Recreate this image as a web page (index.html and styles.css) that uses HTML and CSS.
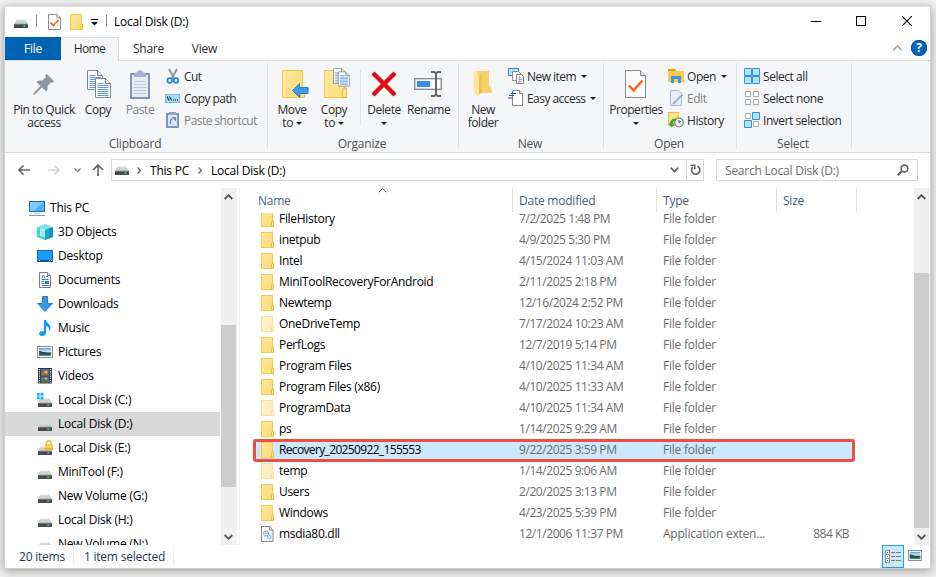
FILE: index.html
```html
<!DOCTYPE html>
<html lang="en">
<head>
    <meta charset="UTF-8">
    <title>Local Disk (D:)</title>
    <link rel="stylesheet" href="styles.css">
</head>
<body>
    <svg class="sprite" width="0" height="0">
        <defs>
            <linearGradient id="gFolder" x1="0" y1="0" x2="1" y2="1"><stop offset="0" stop-color="#ffe79c"/><stop offset="1" stop-color="#fddc78"/></linearGradient>
            <linearGradient id="gDrive" x1="0" y1="0" x2="0" y2="1"><stop offset="0" stop-color="#dfe1e3"/><stop offset="1" stop-color="#bfc3c6"/></linearGradient>
            <linearGradient id="gPic" x1="0" y1="0" x2="0" y2="1"><stop offset="0" stop-color="#5b9fe8"/><stop offset=".45" stop-color="#d4ecfa"/><stop offset=".6" stop-color="#41725b"/><stop offset="1" stop-color="#4a86b8"/></linearGradient>
        </defs>
        <symbol id="i-drive" viewBox="0 0 16 16"><path d="M3.500 6.500h9L15 11H1z" fill="url(#gDrive)"/><rect x="1" y="11" width="14" height="4" rx=".6" fill="#474a4c"/><path d="M1.500 11.300h13" stroke="#8c8c8c" stroke-width=".7"/><rect x="10.500" y="12.300" width="1.800" height="1.500" fill="#38e54d"/></symbol>
        <symbol id="i-folder" viewBox="0 0 13 16"><rect x=".5" y=".5" width="11" height="15" fill="url(#gFolder)" stroke="#efcb52"/><path d="M10.500 15.500V11.200l1-1.200h1v5.500z" fill="#ffe28a" stroke="#e8c043"/></symbol>
        <symbol id="i-dll" viewBox="0 0 13 16"><path d="M.5.5h8l3.500 3.500v11.500H.5z" fill="#fafafa" stroke="#8a8a8a"/><path d="M8.500.5v3.500h3.500" fill="#ddd" stroke="#8a8a8a"/><circle cx="5" cy="7.500" r="2.300" fill="none" stroke="#8f979c" stroke-width="1.400" stroke-dasharray="1.200 .5"/><circle cx="5" cy="7.500" r=".8" fill="#9aa"/><circle cx="8.300" cy="11" r="1.700" fill="none" stroke="#6eb5df" stroke-width="1.400" stroke-dasharray="1.100 .5"/></symbol>
        <symbol id="i-pc" viewBox="0 0 16 16"><rect x=".5" y="1.500" width="15" height="10" fill="#4db2f5" stroke="#1c6fa6"/><path d="M1 2h14L4 11H1z" fill="#7bcbff"/><path d="M5 13h6v1H5z" fill="#b7c1c8"/><path d="M0 15h16v1H0z" fill="#8299a9"/></symbol>
        <symbol id="i-3d" viewBox="0 0 16 16"><path d="M8 0l8 3-8 3-8-3z" fill="#7ee4ec"/><path d="M0 3l8 3v10l-8-3z" fill="#4cd0da"/><path d="M3 3.800l5 2V13l-5-1z" fill="#a7eef1"/><path d="M16 3L8 6v10l8-3z" fill="#0b8ec2"/><path d="M8 6l5-2v8l-5 4z" fill="#16a5cf"/></symbol>
        <symbol id="i-desktop" viewBox="0 0 16 16"><rect x=".5" y="2.500" width="15" height="11" fill="#1a9cff" stroke="#1569a8"/><path d="M1 12h14v1.500H1z" fill="#0d4d85"/><path d="M2 12.500h1m9 0h1m1 0h1" stroke="#fff"/></symbol>
        <symbol id="i-docs" viewBox="0 0 16 16"><path d="M2.500.5h8l3 3v12h-11z" fill="#fff" stroke="#7d7d7d"/><path d="M10.500.5v3h3" fill="#ddd" stroke="#7d7d7d"/><path d="M5 6l1.500-3L8 6M4.500 7.500h7M4.500 9.500h3M4.500 11.500h3M4.500 13.500h7M9 4.500h2" stroke="#2d86c4" fill="none"/><path d="M8 9h4v3H8z" fill="#4d7ea0"/></symbol>
        <symbol id="i-down" viewBox="0 0 16 16"><path d="M5.500.5h5v7h5L8 15.500.5 7.500h5z" fill="#3b98e4" stroke="#2a7dc4"/></symbol>
        <symbol id="i-music" viewBox="0 0 16 16"><path d="M7 0h2c.3 3 4.500 3.800 4.500 7.500 0 1.700-.8 3-1.500 3.500.5-3-1-4.500-3-5V13c0 2-2 3-4 3s-3-1-3-2.500S4 11 7 11z" fill="#0a9df5"/></symbol>
        <symbol id="i-pics" viewBox="0 0 16 16"><rect x=".5" y="2.500" width="15" height="11" fill="#fff" stroke="#8a8a8a"/><rect x="2" y="4" width="12" height="8" fill="url(#gPic)"/><path d="M2 7c3 0 5 2 12 2v1.500H2z" fill="#27503f"/></symbol>
        <symbol id="i-video" viewBox="0 0 16 16"><rect x="1" y="0" width="14" height="15.500" fill="#343434"/><path d="M2.500 1v14M13.500 1v14" stroke="#fff" stroke-width="1.200" stroke-dasharray="1.200 1"/><rect x="4" y="1" width="8" height="6.500" fill="#3d6fbe"/><rect x="4" y="8.500" width="8" height="6.500" fill="#3b72c8"/><path d="M4 5l3-3 2 3 2-2 1 4.500H4z" fill="#a36a2c"/><circle cx="9" cy="4" r="1.500" fill="#e6c132"/><path d="M4 13l4-2 4 3v1H4z" fill="#58733a"/><circle cx="9" cy="10.500" r="1.200" fill="#e8b93a"/></symbol>
        <symbol id="i-drivec" viewBox="0 0 16 16"><use href="#i-drive"/><path d="M0 1h2.700v2.700H0zM3.500.7h3v3h-3zM0 4.500h2.700v2.700H0zM3.500 4.500h3v3h-3z" fill="#16b4f2"/></symbol>
        <symbol id="i-drivee" viewBox="0 0 16 16"><use href="#i-drive"/><path d="M9.500 5V3c0-3 4.500-3 4.500 0v2" fill="none" stroke="#e6b83a" stroke-width="1.400"/><rect x="7.500" y="4" width="8.500" height="6" fill="#f6cf58"/><path d="M7.500 8h8.500v2H7.500z" fill="#e6b437"/></symbol>
        <symbol id="i-check" viewBox="0 0 21 28"><path d="M.5.5h15l5 5v22H.5z" fill="#fbfbfb" stroke="#8b8b8b"/><path d="M15.500.5v5h5" fill="#e6e6e6" stroke="#8b8b8b"/><path d="M4 15.500l4.500 5 9-10" fill="none" stroke="#f0641e" stroke-width="2.400"/></symbol>
        <symbol id="i-page" viewBox="0 0 16 20"><path d="M.5.5h10l5 5v14H.5z" fill="#fff" stroke="#858585"/><path d="M10.500.5v5h5" fill="#e8e8e8" stroke="#858585"/><path d="M2.500 7.500h11M2.500 9.500h11M2.500 11.500h11M2.500 13.500h11M2.500 15.500h11M2.500 17.500h11M2.500 5.500h6" stroke="#5b9be6"/></symbol>
        <symbol id="i-bigfolder" viewBox="0 0 23 28"><rect x=".5" y=".5" width="20" height="27" fill="url(#gFolder)" stroke="#efc94f"/><path d="M2.500 1v26" stroke="#fff0bc"/><path d="M18.500 27.500V20l1.500-2h2.500v9.500z" fill="#ffdf7f" stroke="#e6bd41"/></symbol>
    </svg>

    <div class="window">
        <div class="titlebar">
            <svg class="title-drive" width="16" height="16"><use href="#i-drive"/></svg>
            <i class="title-sep"></i>
            <svg class="title-check" width="13" height="16" viewBox="0 0 13 16"><path d="M.5.500h8.500l3.500 3.500v11.500H.5z" fill="#fbfbfb" stroke="#8b8b8b"/><path d="M9 .5v3.500h3.500" fill="#e6e6e6" stroke="#8b8b8b"/><path d="M2.500 8.500l2.700 3 5.300-5.500" fill="none" stroke="#f0641e" stroke-width="1.700"/></svg>
            <svg class="title-folder" width="13" height="16"><use href="#i-folder"/></svg>
            <svg class="title-drop" width="7" height="8"><path d="M0 .5h7" stroke="#111"/><path d="M0 3h7L3.500 6.500z" fill="#111"/></svg>
            <i class="title-sep"></i>
            <span class="title-text">Local Disk (D:)</span>
            <svg class="win-min" width="10" height="10"><path d="M0 4.500h10" stroke="#000"/></svg>
            <svg class="win-max" width="10" height="10"><rect x=".5" y=".5" width="9" height="9" fill="none" stroke="#000"/></svg>
            <svg class="win-close" width="10" height="10"><path d="M0 0l10 10M10 0L0 10" stroke="#000" stroke-width="1.100"/></svg>
        </div>

        <div class="tabs">
            <div class="tab tab-file">File</div>
            <div class="tab tab-home">Home</div>
            <div class="tab tab-share">Share</div>
            <div class="tab tab-view">View</div>
            <svg class="collapse" width="9" height="6"><path d="M.5 5l4-4 4 4" fill="none" stroke="#999" stroke-width="1.300"/></svg>
            <span class="help">?</span>
        </div>

        <div class="ribbon">
            <div class="group group-clipboard">
                <div class="tools">
                    <div class="big w-pin">
                        <div class="big-icon"><svg width="22" height="22" viewBox="0 0 22 22"><path d="M13.500 1l7.500 7.500-2 1-1.300-.3-3.500 4c.5 2 .1 3.800-1 5L9 14 2.500 20.500.5 21.500 1.500 19.500l6.200-6.500-3.900-4c1.500-1.200 3.200-1.400 5-1l4.300-3.500-.3-1.700z" fill="#8e979e" stroke="#8e979e" stroke-width=".6"/></svg></div>
                        Pin to Quick<br>access
                    </div>
                    <div class="big w-copy">
                        <div class="big-icon"><svg width="24" height="28"><use href="#i-page" width="16" height="20"/><use href="#i-page" x="8" y="8" width="16" height="20"/></svg></div>
                        Copy
                    </div>
                    <div class="big w-paste disabled">
                        <div class="big-icon"><svg width="20" height="29"><rect x="1" y="4" width="18" height="24" fill="#e4ebf4" stroke="#8394ba" stroke-width="2"/><path d="M4 11.500h12M4 14.500h12M4 17.500h12M4 20.500h12M4 23.500h12" stroke="#bcc9df"/><path d="M4 2.500h3C8-.5 12-.5 13 2.500h3V7H4z" fill="#a3b1ca"/></svg></div>
                        Paste
                    </div>
                    <div class="small-list">
                        <div class="small"><svg width="16" height="16"><path d="M4 1l5.500 10M12 1L6.500 11" stroke="#8c9499" stroke-width="1.800"/><circle cx="4.700" cy="12.500" r="2.300" fill="none" stroke="#1f86c8" stroke-width="1.700"/><circle cx="11" cy="12.500" r="2.300" fill="none" stroke="#1f86c8" stroke-width="1.700"/></svg>Cut</div>
                        <div class="small"><svg width="16" height="16"><rect x=".5" y="4.500" width="14" height="8" fill="#a6dcfb" stroke="#8bb9d5"/><path d="M2 6.500l2 4M4.500 6.500l2 4" stroke="#153e63" stroke-width="1.200"/><path d="M8 10h1m1 0h1m1 0h1" stroke="#153e63" stroke-width="1.300"/></svg>Copy path</div>
                        <div class="small disabled"><svg width="16" height="16"><rect x="2" y="2" width="11" height="13" fill="#dfe7f2" stroke="#8394ba" stroke-width="2"/><path d="M4 0h7v3H4z" fill="#93a3c3"/><path d="M5.500 12V9c0-1 1-2 2-2" fill="none" stroke="#7a8eb8" stroke-width="1.500"/><path d="M6.500 5H11v4.500z" fill="#7a8eb8"/></svg>Paste shortcut</div>
                    </div>
                </div>
                <div class="group-name">Clipboard</div>
            </div>

            <div class="group group-organize">
                <div class="tools">
                    <div class="big w-move">
                        <div class="big-icon"><svg width="28" height="30"><use href="#i-bigfolder" x="0" y="2" width="23" height="28"/><path d="M10.500 22.500l7-7v4h8.500v6h-8.500v4z" fill="#3d9bea" stroke="#2a7fc6"/></svg></div>
                        Move<br>to <i class="caret"></i>
                    </div>
                    <div class="big w-copyto">
                        <div class="big-icon"><svg width="28" height="30"><use href="#i-bigfolder" x="0" y="2" width="23" height="28"/><use href="#i-page" x="9" y="0" width="13" height="16"/><use href="#i-page" x="14" y="3" width="12" height="16"/></svg></div>
                        Copy<br>to <i class="caret"></i>
                    </div>
                    <div class="tool-sep"></div>
                    <div class="big w-delete">
                        <div class="big-icon"><svg width="26" height="26"><path d="M2 2l22 22M24 2L2 24" stroke="#e10b12" stroke-width="4.500"/></svg></div>
                        Delete<br><i class="caret"></i>
                    </div>
                    <div class="big w-rename">
                        <div class="big-icon"><svg width="28" height="26"><rect x=".7" y="7.700" width="26.600" height="10.600" fill="#fff" stroke="#858585" stroke-width="1.300"/><rect x="3" y="10" width="13" height="6" fill="#3292e4"/><path d="M17 1h3.500L22 2.500 23.500 1H27M17 25h3.500l1.500-1.500 1.500 1.500H27M22 2v22" fill="none" stroke="#686868" stroke-width="2"/></svg></div>
                        Rename
                    </div>
                </div>
                <div class="group-name">Organize</div>
            </div>

            <div class="group group-new">
                <div class="tools">
                    <div class="big w-newfolder">
                        <div class="big-icon"><svg width="20" height="28"><path d="M4 1h12v14l3 5v3H8z" fill="#f6d06a"/><path d="M.5 1H4l2 6v20L.5 22z" fill="#ffe59a"/><path d="M6 7l3-4v20l-3 1z" fill="#ecc359"/></svg></div>
                        New<br>folder
                    </div>
                    <div class="small-list">
                        <div class="small"><svg width="16" height="16"><rect x=".5" y=".5" width="10" height="7" fill="#b9e1f4" stroke="#4c89a8"/><path d="M4.500 3.500h6l2 2v7h-8z" fill="#fff" stroke="#888"/><path d="M8.500 6.500h5l2 2v7h-7z" fill="#fff" stroke="#888"/><path d="M10 9.500h2M10 11.500h4M10 13.500h4" stroke="#8fb6d8"/><path d="M11.500 8v7" stroke="#ef9a9a"/></svg>New item <i class="caret"></i></div>
                        <div class="small"><svg width="16" height="16"><path d="M4.500.5h7l3 3v12h-10z" fill="#fff" stroke="#888"/><path d="M11.500.5v3h3" fill="#ddd" stroke="#888"/><path d="M3 3.500h5M1 5.500h5M0 8h5" stroke="#1f5f9d" stroke-width="1.200"/></svg>Easy access <i class="caret"></i></div>
                    </div>
                </div>
                <div class="group-name">New</div>
            </div>

            <div class="group group-open">
                <div class="tools">
                    <div class="big w-props">
                        <div class="big-icon"><svg width="21" height="28"><use href="#i-check"/></svg></div>
                        Properties<br><i class="caret"></i>
                    </div>
                    <div class="small-list">
                        <div class="small"><svg width="16" height="16"><path d="M0 1h7l1 2h8v11H0z" fill="#fccb4b"/><path d="M0 1h7l1 2H0z" fill="#e0a010"/><path d="M3 8h10v7H10v-4H6v4H3z" fill="#3b98e4"/></svg>Open <i class="caret"></i></div>
                        <div class="small disabled"><svg width="16" height="16"><path d="M2.500.5h8l3 3v12h-11z" fill="#e8eff8" stroke="#a9b9d3"/><path d="M14.500 4.500L5 14" stroke="#9fb3d3" stroke-width="2.200"/></svg>Edit</div>
                        <div class="small"><svg width="16" height="16"><rect x=".5" y=".5" width="10" height="13" fill="url(#gFolder)" stroke="#e8c043"/><circle cx="11" cy="10.500" r="4.300" fill="#e9edef" stroke="#80888c" stroke-width="1.300"/><path d="M11 8v2.500l2-1" stroke="#555" fill="none"/><path d="M3 14c0-4 1-6.500 5-6.500" fill="none" stroke="#2fae3e" stroke-width="2.600"/><path d="M.5 11.500h6L4 15.500z" fill="#2fae3e"/></svg>History</div>
                    </div>
                </div>
                <div class="group-name">Open</div>
            </div>

            <div class="group group-select">
                <div class="tools">
                    <div class="small-list">
                        <div class="small"><svg width="16" height="16"><g fill="#b6e0fb" stroke="#2e94e0"><path d="M.5.5h7v7h-7zM8.500.5h7v7h-7zM.5 8.500h7v7h-7zM8.500 8.500h7v7h-7z"/></g></svg>Select all</div>
                        <div class="small"><svg width="16" height="16"><g fill="#fff" stroke="#a6a6a6"><path d="M1.500 1.500h5v5h-5zM9.500 1.500h5v5h-5zM1.500 9.500h5v5h-5zM9.500 9.500h5v5h-5z"/></g></svg>Select none</div>
                        <div class="small"><svg width="16" height="16"><g fill="#fff" stroke="#a6a6a6"><path d="M1.500 1.500h5v5h-5zM9.500 9.500h5v5h-5z"/></g><g fill="#b6e0fb" stroke="#2e94e0"><path d="M8.500.5h7v7h-7zM.5 8.500h7v7h-7z"/></g></svg>Invert selection</div>
                    </div>
                </div>
                <div class="group-name">Select</div>
            </div>
        </div>

        <div class="navbar">
            <svg class="nav-back" width="12" height="10"><path d="M12 5H1M5.500.5L1 5l4.500 4.500" fill="none" stroke="#666" stroke-width="1.600"/></svg>
            <svg class="nav-forward" width="12" height="10"><path d="M0 5h11M6.500.5L11 5 6.500 9.500" fill="none" stroke="#d5d5d5" stroke-width="1.600"/></svg>
            <svg class="nav-recent" width="7" height="5"><path d="M.5.5l3 3 3-3" fill="none" stroke="#888" stroke-width="1.500"/></svg>
            <svg class="nav-up" width="12" height="12"><path d="M6 12V1M1 6l5-5 5 5" fill="none" stroke="#666" stroke-width="1.700"/></svg>
            <div class="address">
                <svg class="address-drive" width="16" height="16"><use href="#i-drive"/></svg>
                <svg class="crumb" width="4" height="7"><path d="M.5.5l3 3-3 3" fill="none" stroke="#666" stroke-width="1.300"/></svg>
                <span class="crumb-pc">This PC</span>
                <svg class="crumb" width="4" height="7"><path d="M.5.5l3 3-3 3" fill="none" stroke="#666" stroke-width="1.300"/></svg>
                <span>Local Disk (D:)</span>
                <svg class="address-drop" width="9" height="6"><path d="M.7.7l3.800 3.800L8.300.7" fill="none" stroke="#666" stroke-width="1.800"/></svg>
                <div class="refresh"><svg width="11" height="12"><path d="M7.500 2.200A4.200 4.200 0 1 1 3 2.800" fill="none" stroke="#666" stroke-width="1.700"/><path d="M.5 1.200h4.300v4" fill="none" stroke="#666" stroke-width="1.500"/></svg></div>
            </div>
            <div class="search">
                <span>Search Local Disk (D:)</span>
                <svg width="12" height="12"><circle cx="7.500" cy="4.500" r="3.400" fill="none" stroke="#666" stroke-width="1.600"/><path d="M5 7L.7 11.300" stroke="#666" stroke-width="2"/></svg>
            </div>
        </div>

        <div class="main">
            <div class="sidebar" id="sidebar"></div>
            <div class="scrollbar scroll-side">
                <svg width="9" height="6"><path d="M.7 5l3.800-3.800L8.300 5" fill="none" stroke="#505050" stroke-width="1.800"/></svg>
                <div class="thumb"></div>
                <svg width="9" height="6"><path d="M.7 1l3.800 3.800L8.300 1" fill="none" stroke="#505050" stroke-width="1.800"/></svg>
            </div>
            <div class="files">
                <div class="columns">
                    <div class="col-name">Name<svg class="sort" width="9" height="5"><path d="M.7 4.300L4.500.7l3.800 3.600" fill="none" stroke="#666"/></svg></div>
                    <div class="col-date">Date modified</div>
                    <div class="col-type">Type</div>
                    <div class="col-size">Size</div>
                </div>
                <div class="rows-clip"><div class="rows" id="rows"></div></div>
            </div>
            <div class="scrollbar scroll-files">
                <svg width="9" height="6"><path d="M.7 5l3.800-3.800L8.300 5" fill="none" stroke="#505050" stroke-width="1.800"/></svg>
                <div class="thumb"></div>
                <svg width="9" height="6"><path d="M.7 1l3.800 3.800L8.300 1" fill="none" stroke="#505050" stroke-width="1.800"/></svg>
            </div>
        </div>

        <div class="statusbar">
            <span class="status-count">20 items</span>
            <span class="status-selected">1 item selected</span>
            <div class="view-details"><svg width="16" height="13"><rect x=".5" y=".5" width="4" height="12" fill="#fff" stroke="#909090"/><path d="M1 4.500h3M1 8.500h3" stroke="#909090"/><path d="M2 2.500h1" stroke="#3a6"/><path d="M2 6.500h1" stroke="#38d"/><path d="M2 10.500h1" stroke="#d33"/><path d="M6 2.500h4m1 0h5M6 6.500h4m1 0h5M6 10.500h4m1 0h5" stroke="#777"/></svg></div>
            <svg class="view-large" width="14" height="11" viewBox="0 2 16 12" preserveAspectRatio="none"><use href="#i-pics" width="16" height="16"/></svg>
        </div>
    </div>

    <script>
        const places = [
            ['pc', 'This PC'],
            ['3d', '3D Objects'],
            ['desktop', 'Desktop'],
            ['docs', 'Documents'],
            ['down', 'Downloads'],
            ['music', 'Music'],
            ['pics', 'Pictures'],
            ['video', 'Videos'],
            ['drivec', 'Local Disk (C:)'],
            ['drive', 'Local Disk (D:)', 'selected'],
            ['drivee', 'Local Disk (E:)'],
            ['drive', 'MiniTool (F:)'],
            ['drive', 'New Volume (G:)'],
            ['drive', 'Local Disk (H:)'],
            ['drive', 'New Volume (N:)']
        ];

        const files = [
            ['FileHistory', '7/2/2025 1:48 PM'],
            ['inetpub', '4/9/2025 5:30 PM'],
            ['Intel', '4/15/2024 11:03 AM'],
            ['MiniToolRecoveryForAndroid', '2/11/2025 2:18 PM'],
            ['Newtemp', '12/16/2024 2:52 PM'],
            ['OneDriveTemp', '7/17/2024 10:23 AM', 'hidden-item'],
            ['PerfLogs', '12/7/2019 5:14 PM'],
            ['Program Files', '4/10/2025 11:34 AM'],
            ['Program Files (x86)', '4/10/2025 11:33 AM'],
            ['ProgramData', '4/10/2025 11:34 AM', 'hidden-item'],
            ['ps', '1/14/2025 9:29 AM'],
            ['Recovery_20250922_155553', '9/22/2025 3:59 PM', 'selected'],
            ['temp', '1/14/2025 9:06 AM', 'hidden-item'],
            ['Users', '2/20/2025 3:13 PM'],
            ['Windows', '4/23/2025 5:39 PM'],
            ['msdia80.dll', '12/1/2006 11:37 PM', 'dll']
        ];

        document.getElementById('sidebar').innerHTML = places.map(([icon, name, cls], i) =>
            `<div class="place ${i === 0 ? 'root' : ''} ${cls || ''}"><svg width="16" height="16"><use href="#i-${icon}"/></svg><span>${name}</span></div>`
        ).join('');

        document.getElementById('rows').innerHTML = files.map(([name, date, cls]) => {
            const dll = cls === 'dll';
            return `<div class="row ${cls || ''}">
                <div class="cell-name"><svg width="13" height="16"><use href="#i-${dll ? 'dll' : 'folder'}"/></svg>${name}</div>
                <div class="cell-date">${date}</div>
                <div class="cell-type">${dll ? 'Application exten...' : 'File folder'}</div>
                <div class="cell-size">${dll ? '884 KB' : ''}</div>
            </div>`;
        }).join('');
    </script>
</body>
</html>
```
FILE: styles.css
```css
* { margin: 0; padding: 0; box-sizing: border-box; }

body {
    width: 936px;
    height: 577px;
    padding: 6px 0 0 4px;
    overflow: hidden;
    background: #f0f0f0;
    font-family: 'Open Sans', 'Noto Sans', sans-serif;
    font-size: 12px;
    letter-spacing: -0.23px;
    color: #000;
}

svg { display: block; flex: none; }
.sprite { position: absolute; }

.window {
    width: 927px;
    height: 563px;
    border: 1px solid #d2d2d2;
    border-top-color: #e0e0e0;
    background: #fff;
    box-shadow: 0 2px 9px rgba(0, 0, 0, 0.35);
}

/* title bar */
.titlebar {
    display: flex;
    align-items: center;
    height: 30px;
}

.title-drive { margin: 0 7px 2px 8px; }
.title-sep { width: 1px; height: 12px; margin-bottom: 2px; background: #8a8a8a; }
.title-check { margin: 0 9px 0 11px; }
.title-folder { margin-right: 8px; }
.title-drop { margin: 2px 8px 0 0; }
.title-text { margin: 0 0 2px 7px; }
.win-min { margin-left: auto; }
.win-max { margin: 0 0 2px 35px; }
.win-close { margin: 0 18px 2px 36px; }

/* tabs */
.tabs {
    display: flex;
    height: 23px;
}

.tab {
    height: 23px;
    line-height: 24px;
    text-align: center;
    color: #2b2b2b;
}

.tab-file { width: 56px; background: #0063b1; color: #fff; }
.tab-home {
    position: relative;
    width: 58px;
    height: 24px;
    border: 1px solid #dadbdc;
    border-width: 1px 1px 0 0;
    background: #f5f6f7;
    line-height: 22px;
    letter-spacing: -0.6px;
}
.tab-share { width: 59px; }
.tab-view { width: 53px; }
.collapse { margin: 8px 9px 0 auto; }

.help {
    width: 16px;
    height: 16px;
    margin: 3px 3px 0 0;
    border-radius: 50%;
    background: #0066c4;
    box-shadow: inset 0 0 0 1px #0a4f94;
    color: #fff;
    font-weight: 700;
    line-height: 16px;
    text-align: center;
}

/* ribbon */
.ribbon {
    display: flex;
    height: 93px;
    border-top: 1px solid #dadbdc;
    border-bottom: 1px solid #dadbdc;
    background: #f5f6f7;
    color: #2b2b2b;
    letter-spacing: -0.45px;
}

.group {
    height: 86px;
    margin-top: 2px;
    border-right: 1px solid #e0e1e2;
}

.group-clipboard { width: 263px; }
.group-organize { width: 191px; }
.group-new { width: 145px; }
.group-open { width: 133px; }
.group-select { width: 115px; }

.tools {
    display: flex;
    height: 72px;
    padding-top: 2px;
}

.group-name {
    height: 16px;
    padding-right: 2px;
    line-height: 17px;
    letter-spacing: -0.2px;
    text-align: center;
    color: #505050;
}

.big {
    flex: none;
    line-height: 13px;
    text-align: center;
    white-space: nowrap;
}

.big-icon {
    display: flex;
    align-items: center;
    justify-content: center;
    height: 38px;
}

.w-pin { width: 70px; margin-left: 4px; }
.w-copy { width: 38px; }
.w-paste { width: 46px; }
.w-move { width: 48px; }
.w-copyto { width: 36px; }
.w-delete { width: 46px; }
.w-rename { width: 42px; }
.w-newfolder { width: 48px; }
.w-props { width: 64px; }
.w-move .big-icon, .w-copyto .big-icon { padding: 0 0 2px 8px; }
.w-copy .big-icon { padding-left: 2px; }
.w-props .big-icon { padding-right: 1px; }

.tool-sep {
    width: 1px;
    height: 55px;
    margin: 5px 0 0 8px;
    background: #e0e1e2;
}

.small {
    display: flex;
    align-items: center;
    gap: 3px;
    height: 22px;
    white-space: nowrap;
}

.group-clipboard .small-list { margin-left: 2px; letter-spacing: -0.55px; }
.group-new .small-list { margin-left: 1px; letter-spacing: -0.55px; }
.group-select .small-list { margin-left: 7px; }
.disabled { color: #838383; }

.caret {
    display: inline-block;
    border: 3px solid transparent;
    border-top-color: #222;
    border-bottom: 0;
    vertical-align: 2px;
}

.small .caret { margin-left: 2px; }

/* address bar */
.navbar {
    display: flex;
    align-items: center;
    height: 35px;
    padding-bottom: 1px;
}

.nav-back { margin-left: 13px; }
.nav-forward { margin-left: 18px; }
.nav-recent { margin-left: 14px; }
.nav-up { margin-left: 11px; }

.address {
    display: flex;
    align-items: center;
    width: 593px;
    height: 22px;
    margin-left: 7px;
    border: 1px solid #d9d9d9;
}

.address-drive { margin: 0 7px 4px 2px; }
.crumb { margin-right: 9px; }
.crumb-pc { margin-right: 9px; }
.address-drop { margin: 0 7px 0 auto; }

.refresh {
    display: flex;
    align-items: center;
    justify-content: center;
    width: 17px;
    height: 20px;
    border-left: 1px solid #d9d9d9;
}

.search {
    display: flex;
    align-items: center;
    justify-content: space-between;
    width: 202px;
    height: 22px;
    margin-left: 12px;
    padding: 0 8px;
    border: 1px solid #d9d9d9;
    color: #6d6d6d;
}

/* panes */
.main {
    display: flex;
    height: 357px;
}

.sidebar {
    width: 216px;
    height: 357px;
    padding: 8px 1px 0 0;
    overflow: hidden;
}

.place {
    display: flex;
    align-items: center;
    gap: 5px;
    height: 24px;
    padding-left: 32px;
}

.place span { margin-bottom: 2px; }
.place.root { padding-left: 24px; }
.place.selected { background: #d9d9d9; }

.scrollbar {
    display: flex;
    flex-direction: column;
    align-items: center;
    justify-content: space-between;
    width: 16px;
    height: 357px;
    padding: 6px 1px 5px 0;
    background: #f0f0f0;
}

.thumb {
    width: 15px;
    background: #cdcdcd;
}

.scroll-side .thumb { height: 162px; margin-top: 125px; margin-bottom: 47px; }
.scroll-files .thumb { height: 255px; margin-top: 73px; margin-bottom: 6px; }

.files {
    width: 677px;
    padding-left: 16px;
    border-left: 2px solid #fff;
    box-shadow: inset 1px 0 #f0f0f0;
}

.columns {
    display: flex;
    height: 25px;
    line-height: 26px;
    color: #4c607a;
}

.columns > div {
    height: 24px;
    border-right: 1px solid #e2e2e2;
}

.col-name { position: relative; width: 258px; padding-left: 3px; }
.col-date { width: 144px; padding-left: 6px; }
.col-type { width: 120px; padding-left: 6px; }
.col-size { width: 80px; padding-left: 6px; }

.sort {
    position: absolute;
    left: 123px;
    top: 0;
}

.rows-clip {
    height: 332px;
    margin-left: -2px;
    overflow: hidden;
}

.rows { margin-top: -5px; }

.row {
    position: relative;
    display: flex;
    align-items: center;
    width: 602px;
    height: 21px;
    padding-left: 8px;
    color: #6d6d6d;
}

.cell-name {
    display: flex;
    align-items: center;
    gap: 5px;
    width: 258px;
    letter-spacing: -0.3px;
    color: #000;
}

.cell-date { width: 144px; letter-spacing: -0.43px; }
.cell-type { width: 120px; }
.cell-size { width: 66px; letter-spacing: -0.5px; text-align: right; }
.row.hidden-item svg { opacity: 0.5; }
.row.selected { background: #cce8ff; }
.row.selected .cell-name { letter-spacing: -0.65px; }

.row.selected::after {
    content: '';
    position: absolute;
    inset: 0 0 -2px 0;
    border: 3px solid #f04e3e;
    border-radius: 3px;
}

/* status bar */
.statusbar {
    display: flex;
    align-items: center;
    height: 23px;
    color: #1e395b;
}

.status-count {
    width: 69px;
    padding-left: 14px;
    border-right: 1px solid #f0f0f0;
}

.status-selected {
    width: 100px;
    padding-left: 10px;
    border-right: 1px solid #f0f0f0;
}

.view-details {
    display: flex;
    align-items: center;
    justify-content: center;
    width: 22px;
    height: 23px;
    margin-left: auto;
    border: 1px solid #26a0da;
    background: #cbe8f6;
}

.view-large { margin: 0 8px 2px 4px; }
```
